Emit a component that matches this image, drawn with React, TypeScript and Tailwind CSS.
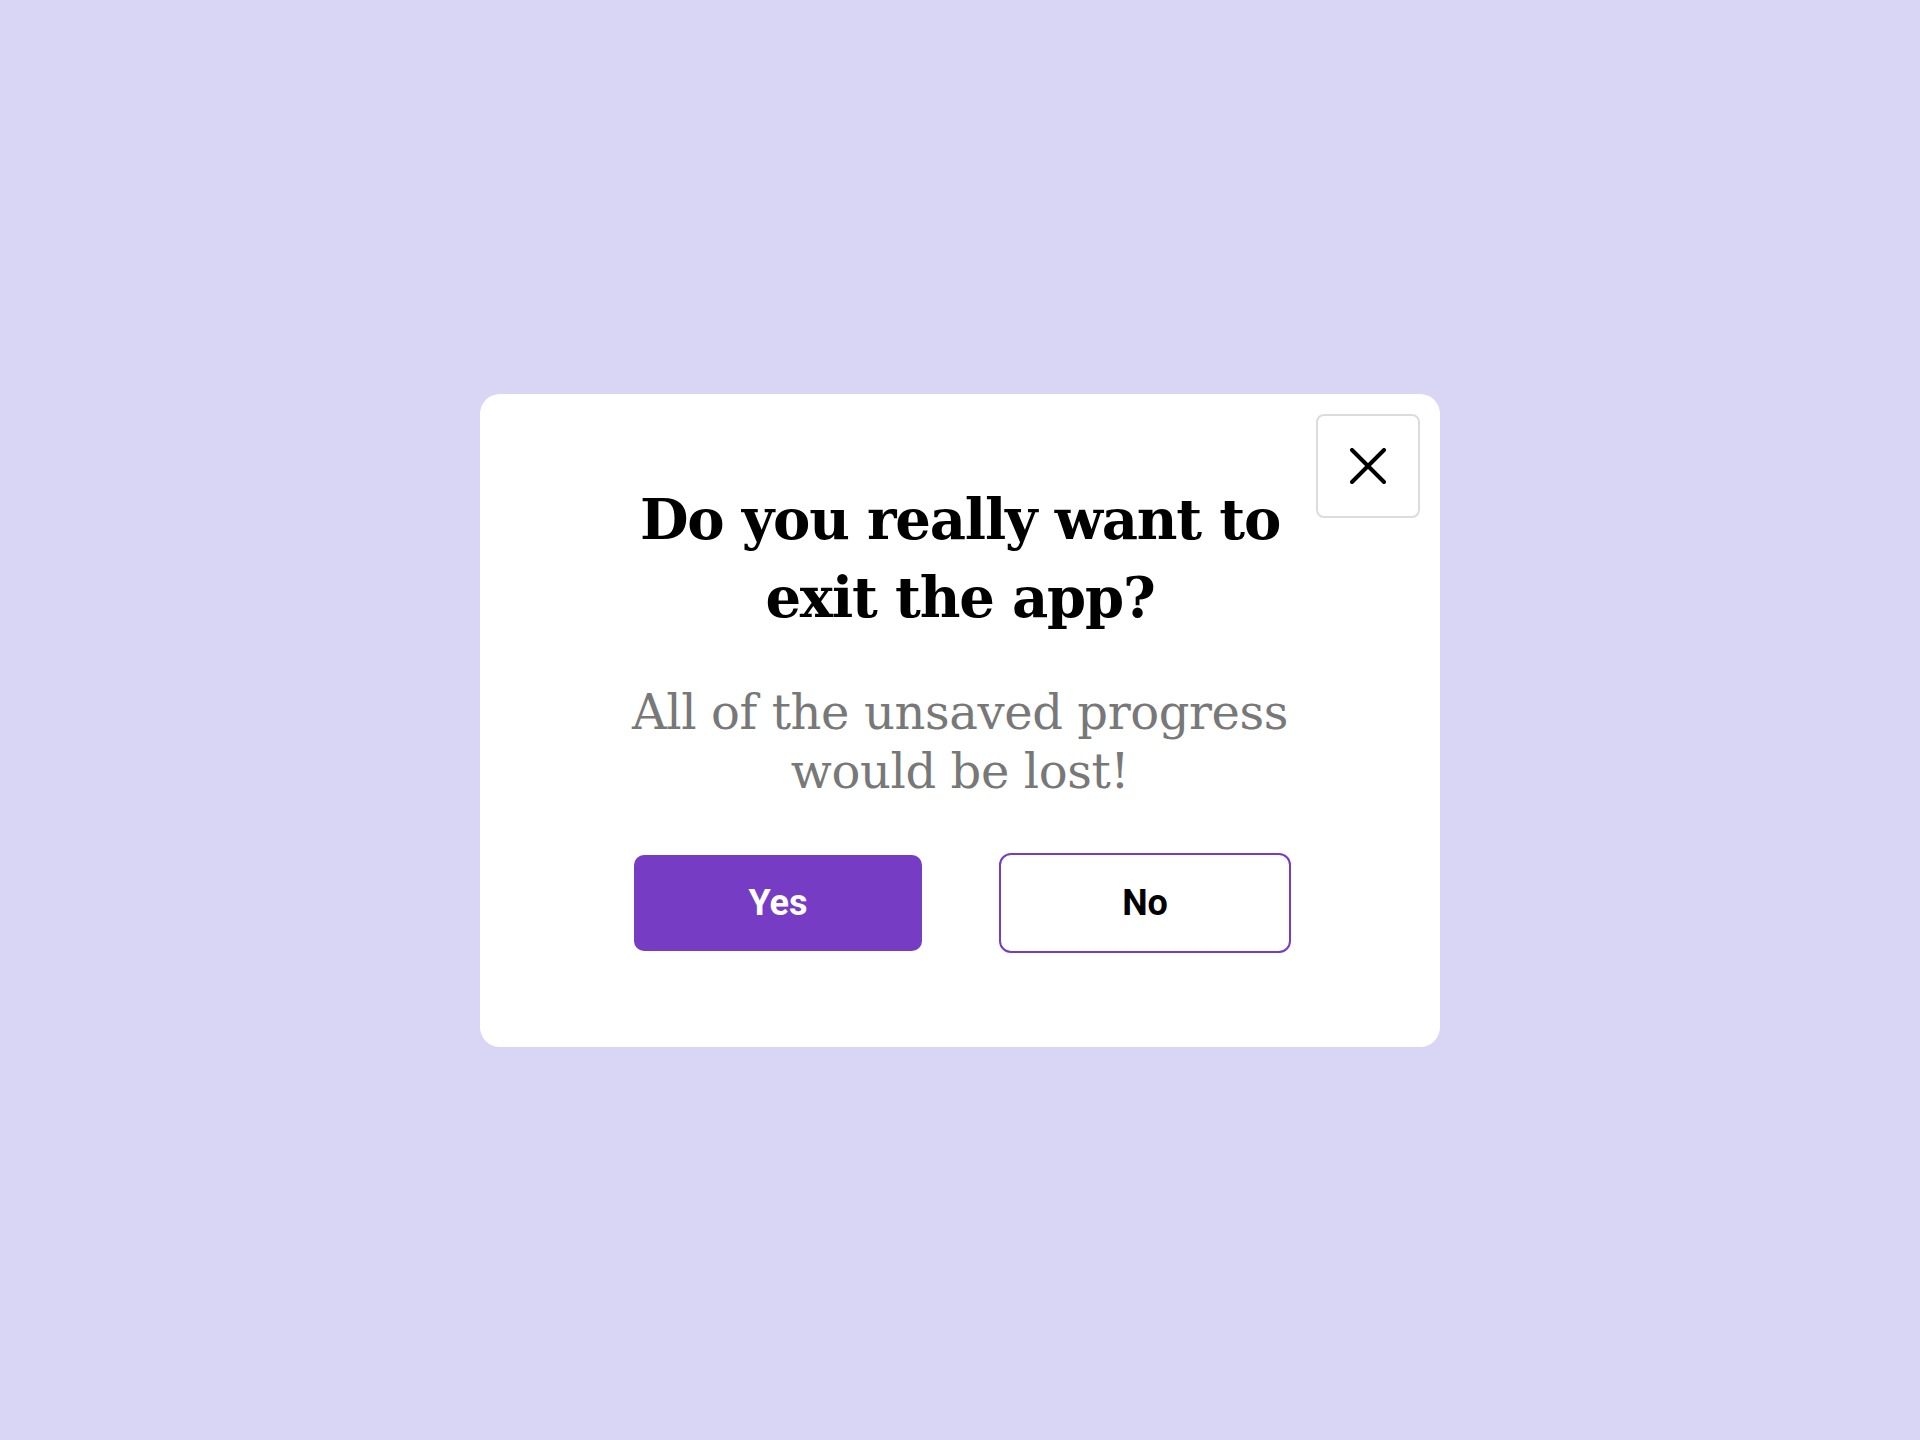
import React from "react";

export default function App() {
  return (
    <div className="w-[1920px] h-[1440px] bg-[#d9d5f5] flex items-start justify-center pt-[394px]">
      <div className="relative w-[960px] h-[653px] bg-white rounded-[20px] flex flex-col items-center pt-[86px]">
        <button className="absolute top-[20px] right-[20px] w-[104px] h-[104px] border-2 border-[#dcdcdc] rounded-[8px] bg-white flex items-center justify-center">
          <svg width="36" height="36" viewBox="0 0 36 36" fill="none">
            <path d="M2 2L34 34M34 2L2 34" stroke="#000" strokeWidth="4" strokeLinecap="round" />
          </svg>
        </button>
        <h1
          className="text-center text-black font-bold text-[56px] leading-[78px] tracking-[-1.2px] w-[700px]"
          style={{ fontFamily: '"DejaVu Serif", serif' }}
        >
          Do you really want to exit the app?
        </h1>
        <p
          className="mt-[47px] text-center text-[#787878] text-[48px] leading-[59px] tracking-[-0.4px] w-[700px]"
          style={{ fontFamily: '"DejaVu Serif", serif' }}
        >
          All of the unsaved progress would be lost!
        </p>
        <div className="mt-[52px] ml-[5px] flex items-center gap-[77px]">
          <button
            className="w-[288px] h-[96px] rounded-[10px] bg-[#763cc4] text-white text-[36px] font-bold"
            style={{ fontFamily: 'Roboto, sans-serif' }}
          >
            Yes
          </button>
          <button
            className="w-[292px] h-[100px] rounded-[12px] border-2 border-[#763cc4] bg-white text-black text-[36px] font-bold"
            style={{ fontFamily: 'Roboto, sans-serif' }}
          >
            No
          </button>
        </div>
      </div>
    </div>
  );
}
